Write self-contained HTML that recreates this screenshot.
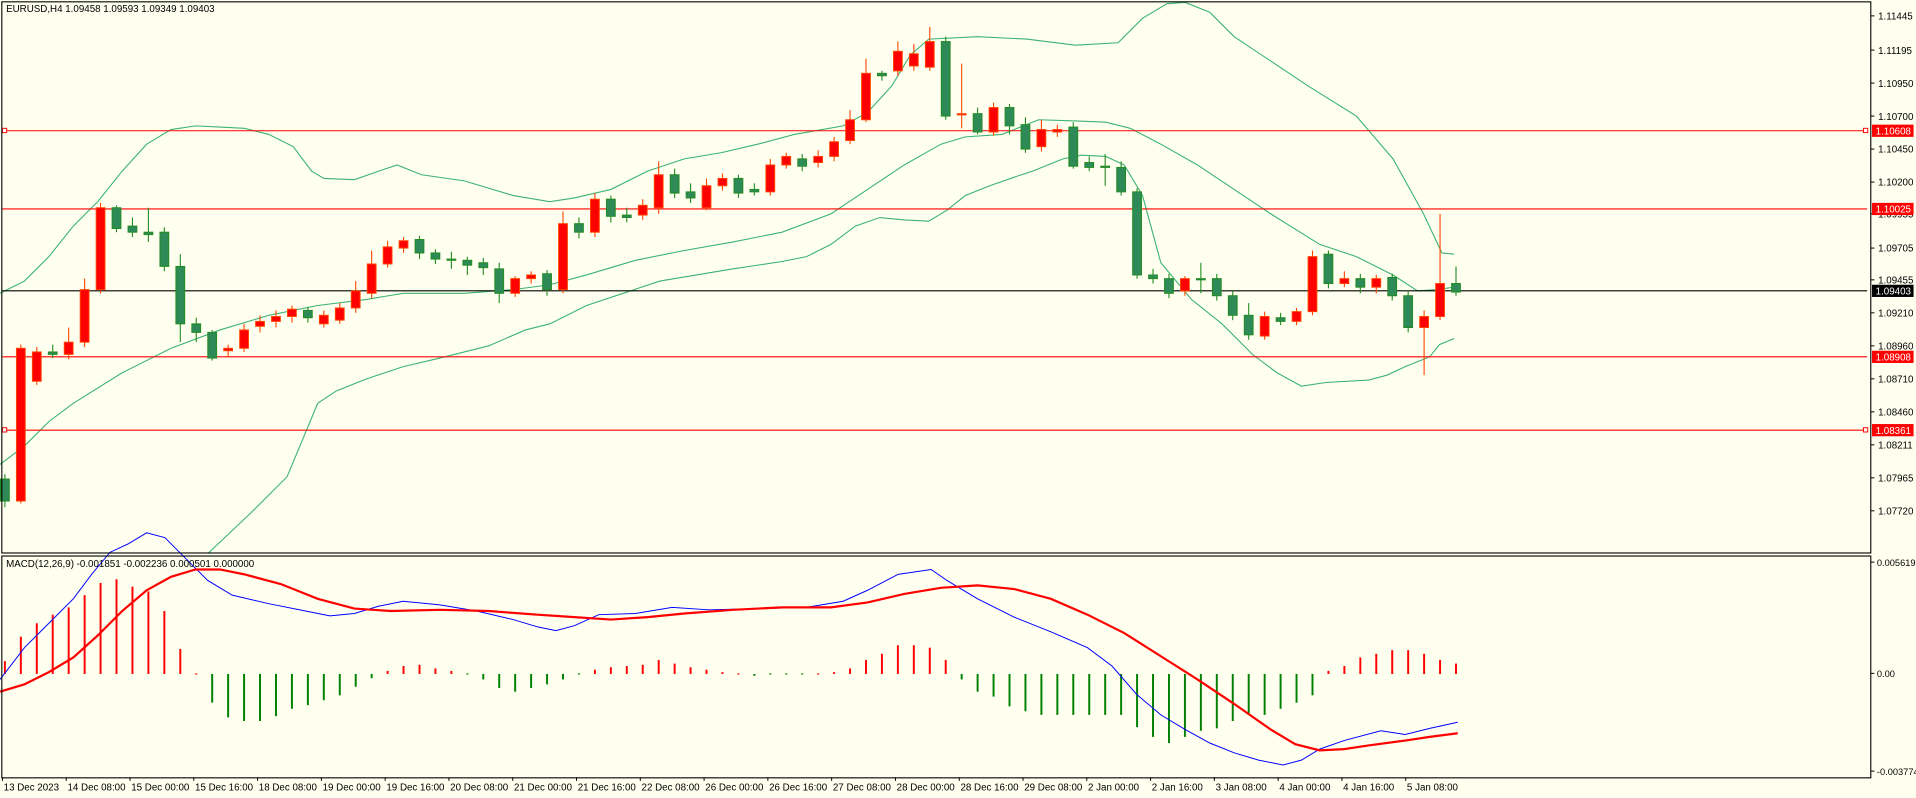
<!DOCTYPE html>
<html><head><meta charset="utf-8"><style>
html,body{margin:0;padding:0;background:#fffff0;overflow:hidden}
svg{display:block}
text{font-family:"Liberation Sans",Tahoma,sans-serif;font-size:8px;fill:#000}
</style></head><body>
<svg id="s" width="1916" height="798" viewBox="0 0 1568 653" preserveAspectRatio="none" xmlns="http://www.w3.org/2000/svg">
<rect x="0" y="0" width="1568" height="653" fill="#fffff0"/>
<g id="bands" fill="none" stroke="#3cb371" stroke-width="0.9">
<polyline points="0,240 20,230 40,210 60,185 80,165 100,140 120,118 140,106 160,103 180,104 200,105 220,110 240,120 255,140 265,146 290,147 310,140 325,135 345,143 380,148 420,160 450,165 470,162 500,155 530,140 560,130 590,125 620,118 650,110 690,103 710,92 730,70 745,45 760,32 800,30 840,32 880,37 915,35 935,15 955,3 970,2 990,10 1010,30 1040,50 1070,70 1110,95 1140,130 1165,175 1180,207 1190,208"/>
<polyline points="0,380 20,365 40,345 60,330 100,305 140,285 180,270 220,258 260,250 300,245 330,240 380,240 420,237 450,233 480,225 520,213 560,205 600,198 640,190 680,175 710,155 740,135 770,118 790,112 820,110 850,98 880,99 905,100 925,105 950,118 980,135 1010,155 1040,175 1080,200 1110,210 1140,225 1160,238 1175,237 1190,235"/>
<polyline points="170,453 205,420 235,390 260,330 275,320 300,310 330,300 360,293 400,283 430,270 450,265 480,250 510,240 540,230 570,225 600,220 640,214 660,210 680,200 700,185 720,178 740,180 760,181 775,172 790,160 810,152 830,145 845,140 870,130 885,127 905,128 920,135 935,160 950,215 975,245 1000,265 1025,290 1045,305 1065,316 1085,313 1120,311 1135,307 1150,300 1170,292 1178,282 1190,277"/>
</g>
<g stroke-width="0.9">
<line x1="2" y1="107" x2="1528" y2="107" stroke="#f00"/>
<line x1="2" y1="171" x2="1528" y2="171" stroke="#f00"/>
<line x1="2" y1="238" x2="1528" y2="238" stroke="#000"/>
<line x1="2" y1="292" x2="1528" y2="292" stroke="#f00"/>
<line x1="2" y1="352" x2="1528" y2="352" stroke="#f00"/>
</g>
<g fill="#fff" stroke="#f00" stroke-width="0.8">
<rect x="2" y="105" width="3.5" height="3.5"/><rect x="1525" y="105" width="3.5" height="3.5"/>
<rect x="2" y="350" width="3.5" height="3.5"/><rect x="1525" y="350" width="3.5" height="3.5"/>
</g>
<g id="candles"></g>
<g id="hist"></g>
<polyline fill="none" stroke="#00f" stroke-width="0.8" points="0,556 20,530 40,510 60,490 75,470 90,452 105,445 120,436 135,440 150,455 170,475 190,487 220,494 250,500 270,504 290,502 310,496 330,492 360,495 390,500 420,507 440,513 455,516 470,512 490,503 520,502 550,497 580,499 620,498 660,497 690,492 710,483 735,470 762,466 775,475 800,490 830,505 860,517 890,530 910,545 930,568 950,585 970,597 990,608 1010,616 1030,622 1050,626 1065,622 1080,613 1100,606 1130,598 1150,601 1170,596 1193,591"/>
<polyline fill="none" stroke="#f00" stroke-width="1.8" points="0,566 20,560 40,550 60,538 80,520 100,500 120,483 140,472 160,466 180,466 200,470 230,478 260,490 290,498 320,500 360,499 400,500 440,503 470,505 500,507 530,505 560,502 600,499 640,497 680,497 710,493 740,486 770,481 800,479 830,482 860,490 890,503 920,518 950,537 980,556 1010,576 1040,597 1060,609 1080,614 1100,613 1120,610 1150,606 1170,603 1193,600"/>
<g fill="none" stroke="#000" stroke-width="0.9">
<rect x="1.5" y="1.5" width="1529.5" height="451"/>
<rect x="1.5" y="455" width="1529.5" height="181.5"/>
</g>
<text x="5" y="10">EURUSD,H4  1.09458 1.09593 1.09349 1.09403</text>
<text x="5" y="464">MACD(12,26,9) -0.001851 -0.002236 0.000501 0.000000</text>
<g id="axis"></g>
<g id="times"></g>
</svg>
<script>
var NS="http://www.w3.org/2000/svg";
function el(p,t,a,txt){var e=document.createElementNS(NS,t);for(var k in a)e.setAttribute(k,a[k]);if(txt!=null)e.textContent=txt;document.getElementById(p).appendChild(e);return e;}
var C=[[392,410,0,388,415],[285,410,1,282,412],[288,312,1,284,315],[288,290,0,282,293],[280,290,1,268,294],[237,280,1,228,284],[170,237,1,166,240],[170,187,0,168,190],[185,190,0,178,194],[190,192,0,170,198],[190,218,0,186,222],[218,265,0,208,280],[265,272,0,260,280],[272,293,0,270,295],[285,287,1,282,292],[270,285,1,265,288],[263,267,1,258,272],[259,263,1,254,268],[253,259,1,250,264],[254,260,0,251,264],[258,265,1,254,268],[252,262,1,248,265],[238,252,1,230,256],[216,240,1,205,244],[202,216,1,197,219],[197,203,1,194,207],[196,207,0,193,212],[207,212,0,204,216],[212,213,0,206,220],[213,217,0,210,225],[215,219,0,211,225],[220,240,0,215,248],[228,240,1,226,243],[225,228,1,222,232],[224,237,0,221,242],[183,237,1,173,240],[183,190,0,178,195],[163,190,1,158,194],[163,177,0,160,182],[176,178,0,170,182],[168,176,1,163,180],[143,170,1,132,175],[143,158,0,138,162],[157,162,0,150,166],[152,170,1,146,172],[146,152,1,142,156],[146,158,0,143,162],[155,157,0,150,160],[135,157,1,130,160],[128,135,1,125,138],[130,136,0,126,140],[128,133,1,123,137],[116,128,1,112,132],[98,115,1,90,118],[60,98,1,48,100],[60,62,0,58,66],[42,58,1,34,62],[44,54,1,36,58],[34,55,1,22,58],[34,95,0,30,98],[93,94,1,52,105],[93,108,0,88,110],[88,108,1,84,111],[88,103,0,85,110],[102,122,0,96,125],[106,120,1,98,124],[106,108,1,102,112],[104,136,0,100,138],[133,137,0,128,140],[136,137,0,126,152],[137,157,0,132,160],[157,225,0,154,228],[225,228,0,220,232],[228,240,0,224,244],[228,238,1,226,242],[228,229,0,215,240],[228,242,0,224,246],[242,258,0,238,262],[258,274,0,248,278],[259,275,1,255,278],[260,263,0,256,266],[255,263,1,252,266],[210,255,1,205,258],[208,232,0,205,236],[228,232,1,222,235],[228,235,0,224,240],[228,235,1,225,240],[227,242,0,224,246],[242,268,0,238,272],[259,268,1,254,307],[232,259,1,175,262],[232,239,0,218,242]];
for(var i=0;i<C.length;i++){var c=C[i],x=4+13.05*i,col=c[2]?"#ff0000":"#2e8b57",st=c[2]?"#ff4500":"#228b22";
el("candles","line",{x1:x,y1:c[3],x2:x,y2:c[4],stroke:st,"stroke-width":0.9});
var h=Math.max(c[1]-c[0],0.8);el("candles","rect",{x:x-3.6,y:c[0],width:7.2,height:h,fill:col,stroke:st,"stroke-width":0.8});}
var H=[541,521,510,503,497,487,477,474,480,484,500,531,551,575,587,590,590,586,580,577,573,569,562,555,549,545,544,547,549,552,556,563,566,563,560,556,552,548,546,545,544,540,543,546,548,550,551,553,552,552,552,551,550,547,540,535,528,528,530,540,556,566,570,578,582,585,585,585,585,585,585,595,603,608,603,598,596,590,585,585,580,575,569,549,545,538,535,532,532,535,540,543];
for(var i=0;i<H.length;i++){var x=4+13.05*i,v=H[i],z=551.5,col=v<z?"#ff0000":"#008000",y1=Math.min(v,z),y2=Math.max(v,z);if(y2-y1<1){y1=z-0.5;y2=z+0.5;}
el("hist","rect",{x:x-0.8,y:y1,width:1.6,height:y2-y1,fill:col});}
var P=[["1.11445",16],["1.11195",44],["1.10950",71],["1.10700",98],["1.10450",125],["1.10200",152],["1.09955",178],["1.09705",206],["1.09455",232],["1.09210",259],["1.08960",286],["1.08710",313],["1.08460",340],["1.08211",367],["1.07965",394],["1.07720",421]];
P.forEach(function(p){el("axis","line",{x1:1531,y1:p[1]-3,x2:1534,y2:p[1]-3,stroke:"#000","stroke-width":0.8});el("axis","text",{x:1537,y:p[1]},p[0]);});
[["1.10608",107,"#f00"],["1.10025",171,"#f00"],["1.09403",238,"#000"],["1.08908",292,"#f00"],["1.08361",352,"#f00"]].forEach(function(p){
el("axis","rect",{x:1532,y:p[1]-5,width:34,height:10,fill:p[2]});el("axis","text",{x:1535,y:p[1]+3,style:"fill:#fff"},p[0]);});
[["0.005619",463],["0.00",554],["-0.003774",634]].forEach(function(p){el("axis","line",{x1:1531,y1:p[1]-3,x2:1534,y2:p[1]-3,stroke:"#000","stroke-width":0.8});el("axis","text",{x:1536,y:p[1],style:"font-size:7.6px"},p[0]);});
var T=["13 Dec 2023","14 Dec 08:00","15 Dec 00:00","15 Dec 16:00","18 Dec 08:00","19 Dec 00:00","19 Dec 16:00","20 Dec 08:00","21 Dec 00:00","21 Dec 16:00","22 Dec 08:00","26 Dec 00:00","26 Dec 16:00","27 Dec 08:00","28 Dec 00:00","28 Dec 16:00","29 Dec 08:00","2 Jan 00:00","2 Jan 16:00","3 Jan 08:00","4 Jan 00:00","4 Jan 16:00","5 Jan 08:00"];
T.forEach(function(t,i){var x=2+52.2*i;el("times","line",{x1:x,y1:636,x2:x,y2:639,stroke:"#000","stroke-width":0.8});el("times","text",{x:x+1,y:647},t);});
</script>
</body></html>
